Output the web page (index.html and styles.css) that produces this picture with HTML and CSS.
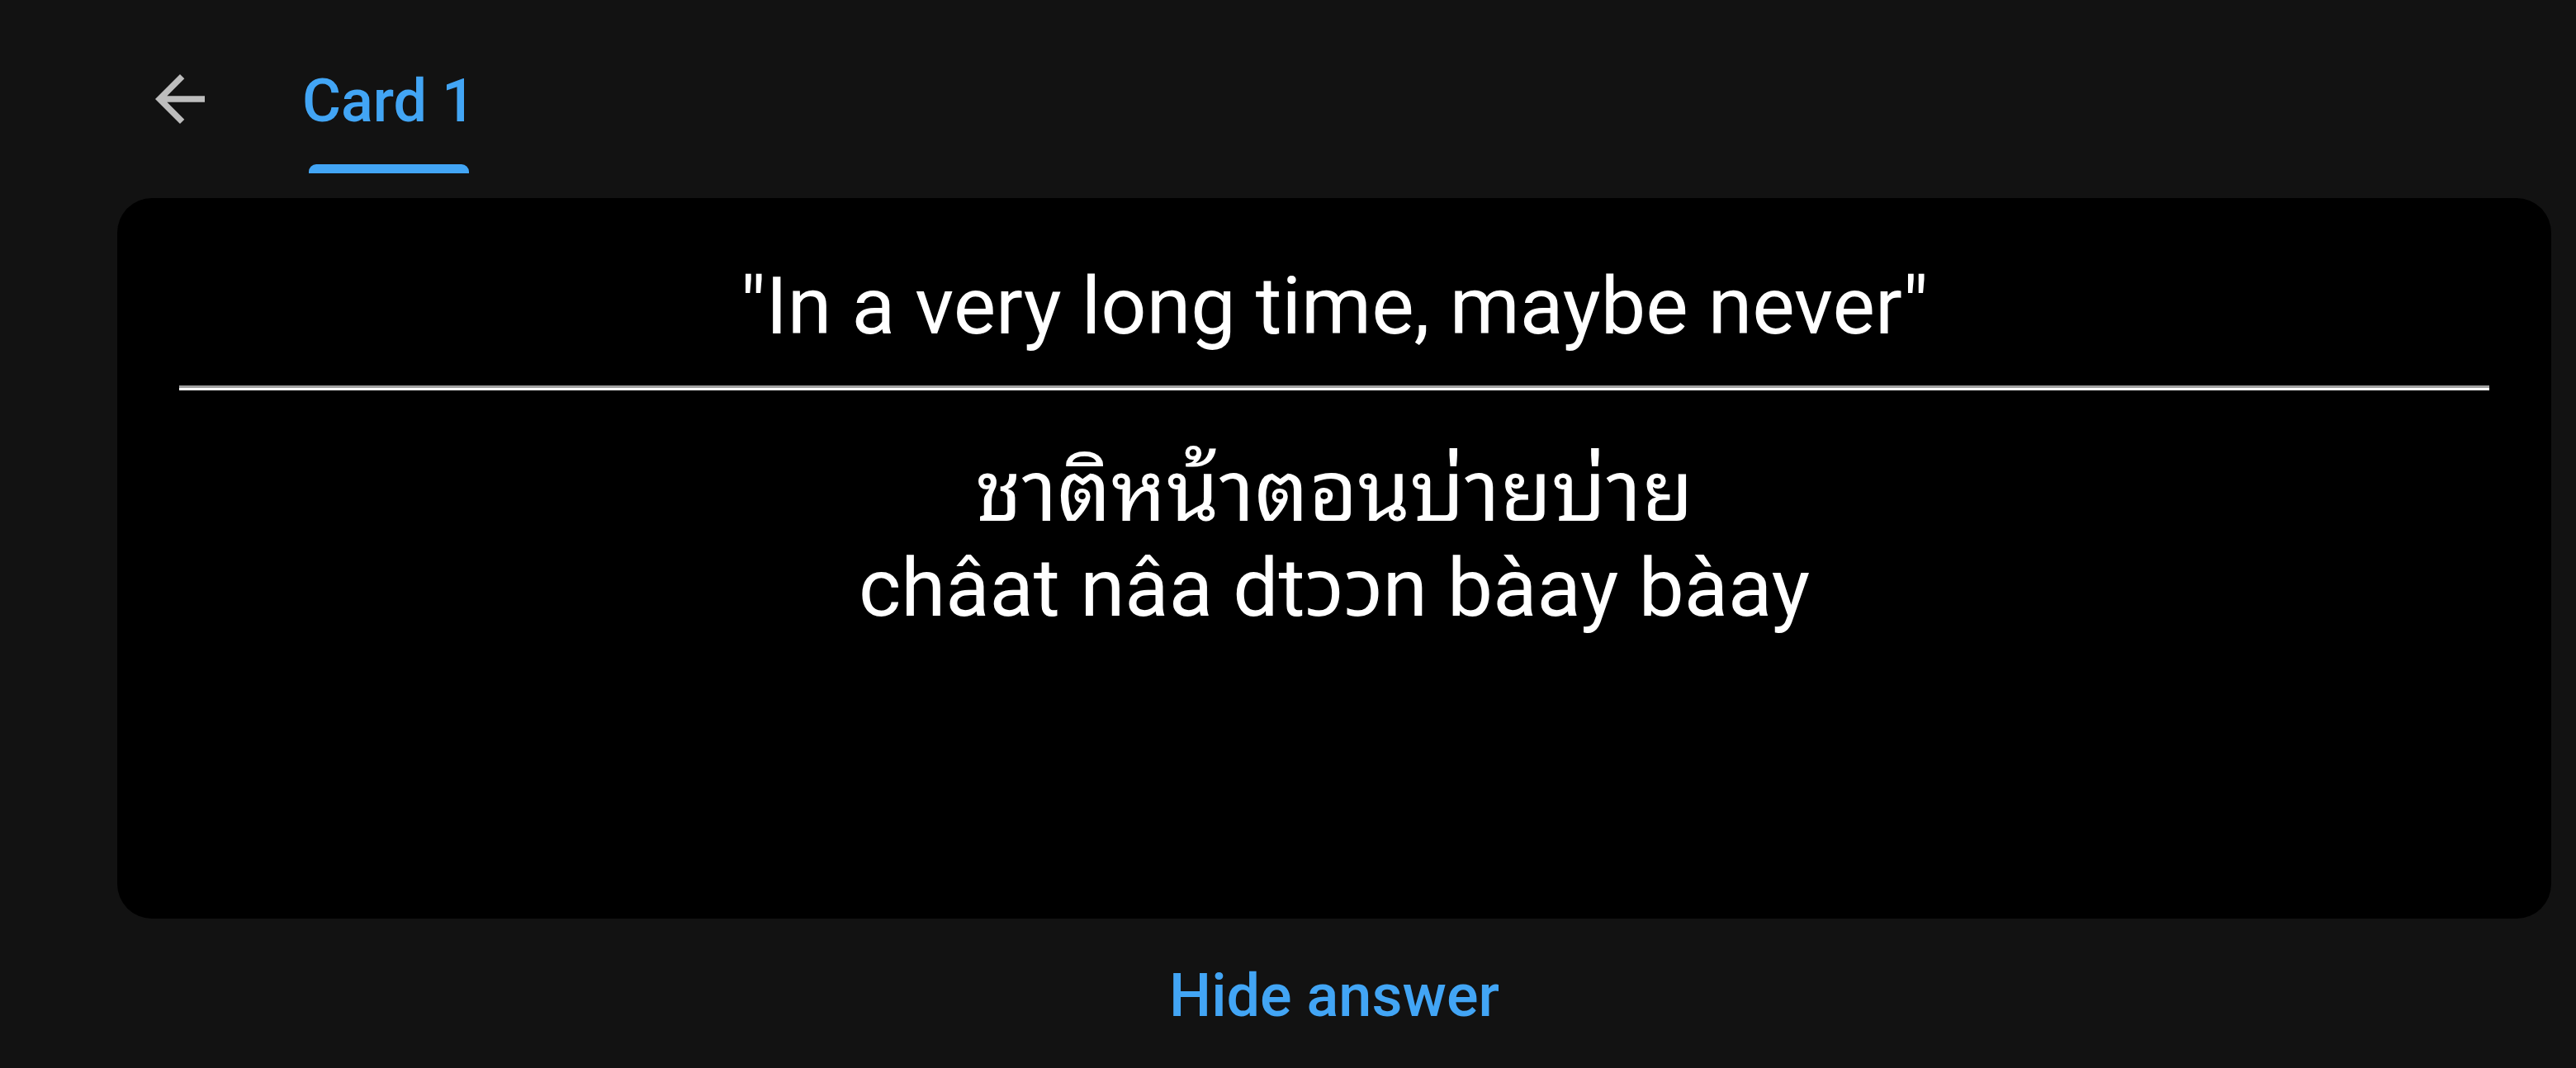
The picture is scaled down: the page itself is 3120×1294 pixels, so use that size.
FILE: index.html
```html
<!DOCTYPE html>
<html lang="en">
<head>
<meta charset="utf-8">
<title>Card 1</title>
<link rel="stylesheet" href="styles.css">
</head>
<body>
<div class="app">
  <header class="topbar">
    <button class="back" aria-label="Back">
      <svg viewBox="0 0 24 24" width="90" height="90"><path d="M20 11H7.83l5.59-5.59L12 4l-8 8 8 8 1.41-1.41L7.83 13H20v-2z"/></svg>
    </button>
    <div class="tab">
      <span class="tab-label">Card 1</span>
      <span class="indicator"></span>
    </div>
  </header>
  <main class="card">
    <p class="question">"In a very long time, maybe never"</p>
    <hr class="divider">
    <p class="answer"><span class="thai" lang="th">ชาติหน้าตอนบ่ายบ่าย</span><br>châat nâa dtɔɔn bàay bàay</p>
  </main>
  <div class="actions">
    <button class="hide">Hide answer</button>
  </div>
</div>
</body>
</html>
```

FILE: styles.css
```css
html, body {
  margin: 0;
  padding: 0;
  background: #121212;
}
body {
  font-family: Roboto, "Noto Sans Thai", "Noto Sans", sans-serif;
  color: #fff;
}
.app {
  width: 3120px;
  height: 1294px;
  display: flex;
  flex-direction: column;
}
.topbar {
  height: 210px;
  display: flex;
  padding-left: 173px;
  box-sizing: border-box;
}
.back {
  width: 90px;
  height: 90px;
  margin-top: 75px;
  padding: 0;
  border: 0;
  background: none;
  fill: #bdbdbd;
}
.back svg { display: block; }
.tab {
  margin-left: 111px;
  width: 194px;
  display: flex;
  flex-direction: column;
  align-items: center;
  padding-top: 80px;
  box-sizing: border-box;
}
.tab-label {
  font-size: 72px;
  font-weight: 500;
  color: #42a5f5;
  white-space: nowrap;
}
.indicator {
  margin-top: auto;
  width: 194px;
  height: 11px;
  background: #42a5f5;
  border-radius: 9px 9px 0 0;
}
.card {
  margin: 30px 30px 0 142px;
  height: 873px;
  background: #000;
  border-radius: 42px;
  padding: 74px 75px 0;
  box-sizing: border-box;
}
.question {
  margin: 0;
  font-size: 97px;
  text-align: center;
  line-height: 114px;
}
.divider {
  margin: 39px 0 0;
  border: 0;
  border-top: 3px solid #a0a0a0;
  border-bottom: 3px solid #fff;
  height: 0;
}
.answer {
  margin: 55px 0 0;
  font-size: 98px;
  line-height: 115px;
  text-align: center;
}
.thai {
  font-family: "Noto Sans Thai Looped", "Noto Sans Thai UI", "Noto Sans Thai", Roboto, sans-serif;
  font-size: 102px;
}
.actions {
  display: flex;
  justify-content: center;
  padding-left: 112px;
  margin-top: 51px;
}
.hide {
  font-family: Roboto, sans-serif;
  font-size: 72px;
  font-weight: 500;
  color: #42a5f5;
  background: none;
  border: 0;
  padding: 0;
  line-height: normal;
}
```
